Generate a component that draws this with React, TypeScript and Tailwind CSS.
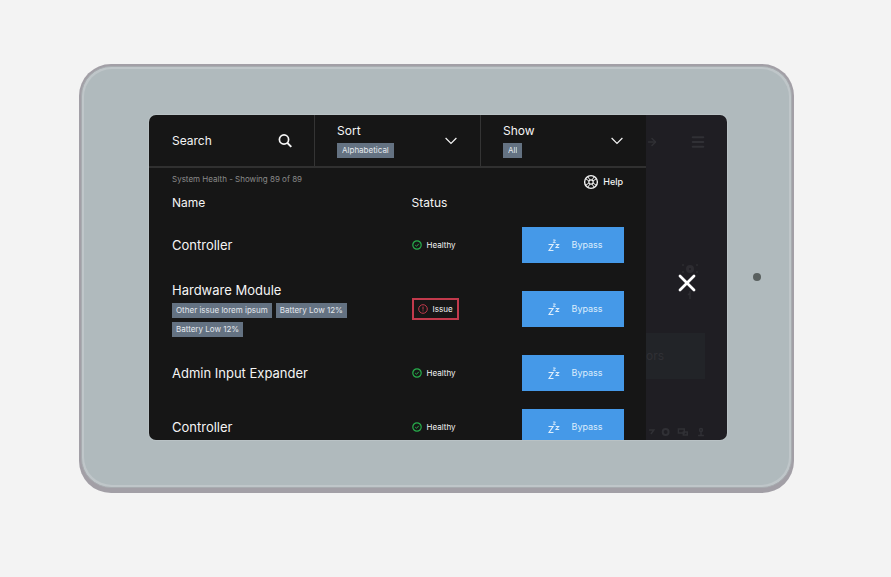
import React, { useState } from "react";
import { ArrowRight, Menu, X } from "lucide-react";
import clsx from "clsx";

type Status = "Healthy" | "Issue";

interface Device {
  id: number;
  name: string;
  status: Status;
  tags?: string[];
}

const DEVICES: Device[] = [
  { id: 1, name: "Controller", status: "Healthy" },
  {
    id: 2,
    name: "Hardware Module",
    status: "Issue",
    tags: ["Other issue lorem ipsum", "Battery Low 12%", "Battery Low 12%"],
  },
  { id: 3, name: "Admin Input Expander", status: "Healthy" },
  { id: 4, name: "Controller", status: "Healthy" },
];

const SearchIcon = () => (
  <svg viewBox="0 0 14 14" className="size-[14px]" fill="none" stroke="currentColor" aria-hidden="true">
    <circle cx="6" cy="5.5" r="4.6" strokeWidth="1.7" />
    <path d="m9.3 8.9 4 4" strokeWidth="2" />
  </svg>
);

const ChevronIcon = () => (
  <svg
    viewBox="0 0 12 8"
    className="pointer-events-none h-2 w-3"
    fill="none"
    stroke="currentColor"
    strokeWidth="1.2"
    aria-hidden="true"
  >
    <path d="m.6 1 5.4 5.4L11.4 1" />
  </svg>
);

const HelpIcon = () => (
  <svg viewBox="0 0 16 16" className="size-4" fill="none" stroke="currentColor" aria-hidden="true">
    <circle cx="8" cy="8" r="6.4" strokeWidth="1.4" />
    <circle cx="8" cy="8" r="2.2" strokeWidth="1.2" />
    <path
      d="M2.7 4.7 5.9 7M4.7 2.7 7 5.9M13.3 4.7 10.1 7M11.3 2.7 9 5.9M2.7 11.3 5.9 9M4.7 13.3 7 10.1M13.3 11.3 10.1 9M11.3 13.3 9 10.1"
      strokeWidth="1"
    />
  </svg>
);

const SnoozeIcon = () => (
  <svg
    viewBox="0 0 12 13"
    className="h-[13px] w-3"
    fill="none"
    stroke="currentColor"
    aria-hidden="true"
  >
    <path d="M.5 5.5H5L1 11.5h4.5" strokeWidth="1.2" />
    <path d="M5 1h2.4L5.200 3.600h2.500" strokeWidth="0.9" />
    <path d="M7.700 5.500h2.900L8 8.500h3.200" strokeWidth="1.1" />
  </svg>
);

const HealthyIcon = () => (
  <svg
    viewBox="0 0 10 10"
    className="size-[10px] text-[#27ae4c]"
    fill="none"
    stroke="currentColor"
    aria-hidden="true"
  >
    <circle cx="5" cy="5" r="4.2" strokeWidth="1.2" />
    <path d="m3.2 5.1 1.3 1.2 2.3-2.5" />
  </svg>
);

const IssueIcon = () => (
  <svg
    viewBox="0 0 10 10"
    className="size-[10px] text-[#c23a4c]"
    fill="none"
    stroke="currentColor"
    aria-hidden="true"
  >
    <circle cx="5" cy="5" r="4.3" />
    <path d="M5 2.6v3M5 6.4v1" />
  </svg>
);

interface FilterSelectProps {
  label: string;
  value: string;
  options: string[];
  onChange: (value: string) => void;
}

const FilterSelect: React.FC<FilterSelectProps> = ({ label, value, options, onChange }) => (
  <label className="flex flex-1 items-center justify-between border-l border-[#343434] pr-[23px] pl-[22px]">
    <span className="flex flex-col items-start gap-1">
      <span className="text-xs leading-4">{label}</span>
      <select
        value={value}
        onChange={(e) => onChange(e.target.value)}
        className="field-sizing-content h-[15px] appearance-none bg-[#647282] px-[5px] text-[8px] leading-[15px] text-[#e4e9ee]"
      >
        {options.map((option) => (
          <option key={option}>{option}</option>
        ))}
      </select>
    </span>
    <ChevronIcon />
  </label>
);

const StatusLabel = ({ status }: { status: Status }) => (
  <span
    className={clsx(
      "inline-flex items-center gap-[5px] text-[8px] leading-3",
      status === "Issue" && "h-[22px] border-2 border-[#c23a4c] px-1"
    )}
  >
    {status === "Issue" ? <IssueIcon /> : <HealthyIcon />}
    {status}
  </span>
);

const DeviceRow = ({ device }: { device: Device }) => (
  <tr>
    <td className="py-[9px]">
      <div className="text-[13px] leading-[18px]">{device.name}</div>
      {device.tags && (
        <div className="mt-1 flex flex-wrap gap-1 pr-14">
          {device.tags.map((tag, i) => (
            <span
              key={i}
              className="bg-[#647282] px-1 text-[8px] leading-[15px] whitespace-nowrap text-[#e4e9ee]"
            >
              {tag}
            </span>
          ))}
        </div>
      )}
    </td>
    <td className="py-[9px]">
      <div className="flex items-center">
        <StatusLabel status={device.status} />
      </div>
    </td>
    <td className="py-[9px]">
      <button
        type="button"
        className="flex h-9 w-full items-center justify-center gap-3 bg-[#4599e8] pl-1 text-[9px] text-[#dcedfc] hover:bg-[#5aa6ec]"
      >
        <SnoozeIcon />
        Bypass
      </button>
    </td>
  </tr>
);

const HealthPanel = () => {
  const [sort, setSort] = useState("Alphabetical");
  const [show, setShow] = useState("All");
  const [query, setQuery] = useState("");

  return (
    <section className="flex w-[86%] flex-col bg-[#161616] text-[#f4f4f4]">
      <div className="flex h-[53px] shrink-0 border-b-2 border-[#303030]">
        <div className="flex flex-1 items-center pr-[22px] pl-[23px]">
          <input
            type="text"
            aria-label="Search"
            placeholder="Search"
            value={query}
            onChange={(e) => setQuery(e.target.value)}
            className="w-full min-w-0 bg-transparent text-xs placeholder:text-[#f4f4f4] focus:outline-none"
          />
          <button type="button" aria-label="Run search">
            <SearchIcon />
          </button>
        </div>
        <FilterSelect
          label="Sort"
          value={sort}
          options={["Alphabetical", "Status"]}
          onChange={setSort}
        />
        <FilterSelect label="Show" value={show} options={["All", "Issues"]} onChange={setShow} />
      </div>

      <div className="flex h-[26px] items-start justify-between px-[23px]">
        <p className="pt-[5px] text-[8px] leading-3 text-[#8a8a8a]">
          System Health - Showing 89 of 89
        </p>
        <button type="button" className="flex items-center gap-1 pt-[6px] text-[9px] font-medium">
          <HelpIcon />
          Help
        </button>
      </div>

      <div className="min-h-0 flex-1 overflow-hidden pr-[22px] pl-[23px]">
        <table className="w-full table-fixed">
          <thead>
            <tr className="h-6 text-left align-top text-xs leading-[18px]">
              <th className="w-[53%] font-normal">Name</th>
              <th className="font-normal">Status</th>
              <th className="w-[102px]" aria-label="Action" />
            </tr>
          </thead>
          <tbody>
            {DEVICES.map((device) => (
              <DeviceRow key={device.id} device={device} />
            ))}
          </tbody>
        </table>
      </div>
    </section>
  );
};

/**
 * Dimmed home screen that stays visible beside the open panel
 */
const DimmedHome = () => (
  <aside className="relative flex flex-1 flex-col overflow-hidden bg-[#1f1e23] text-[#303035]">
    <div className="flex items-center justify-between pt-[19px] pr-[21px]">
      <ArrowRight className="size-3" strokeWidth={3} />
      <Menu className="size-4" strokeWidth={3} />
    </div>
    <div className="mt-auto mr-[22px] flex h-[46px] items-center bg-[#222428] text-xs">ors</div>
    <div className="flex h-[61px] items-end pr-[22px] pb-[3px]">
      <svg
        viewBox="0 0 60 10"
        className="h-[10px] w-full"
        fill="none"
        stroke="currentColor"
        strokeWidth="1.5"
        aria-hidden="true"
      >
        <path d="M3 3h5l-3 4" />
        <circle cx="20" cy="5" r="3" strokeWidth="2" />
        <path d="M33 2h6v4h-6zM38 5h4v3h-4z" />
        <circle cx="56" cy="3" r="1.5" />
        <path d="M56 5v3M53 8.5h6" />
      </svg>
    </div>
    <svg
      viewBox="0 0 18 40"
      className="absolute top-[147px] left-[35px] h-10 w-[18px]"
      fill="none"
      stroke="#2d2c31"
      aria-hidden="true"
    >
      <circle cx="9" cy="7" r="2.5" strokeWidth="3" />
      <path d="M1 3h2M15 3h2M1 10h2M15 10h2M9 29v8M7 33l2-2" strokeWidth="1.5" />
    </svg>
    <button
      type="button"
      aria-label="Close"
      className="absolute inset-0 flex items-center justify-center pt-[10px] text-white"
    >
      <X className="size-7" strokeWidth={2.4} />
    </button>
  </aside>
);

export default function App() {
  return (
    <main className="min-h-screen bg-[#f3f3f3] pt-16 pr-[97px] pb-20 pl-[79px] font-[Inter,'Noto_Sans',sans-serif]">
      <div className="rounded-[32px] bg-[#a29fa6] px-[2px] pt-[2px] pb-[5px]">
        <div className="relative rounded-[30px] border border-[#a8acb0] bg-[#bfc6c9] p-[2px]">
          <div className="rounded-[28px] bg-[#b0babd] pt-[46px] pr-[62px] pb-[45px] pl-[65px]">
            <div className="flex aspect-[578/325] overflow-hidden rounded-[7px] ring-1 ring-[#b9c2c5]">
              <HealthPanel />
              <DimmedHome />
            </div>
          </div>
          <span className="absolute top-1/2 right-[30px] size-2 -translate-y-1/2 rounded-full bg-[#59605f]" />
        </div>
      </div>
    </main>
  );
}
